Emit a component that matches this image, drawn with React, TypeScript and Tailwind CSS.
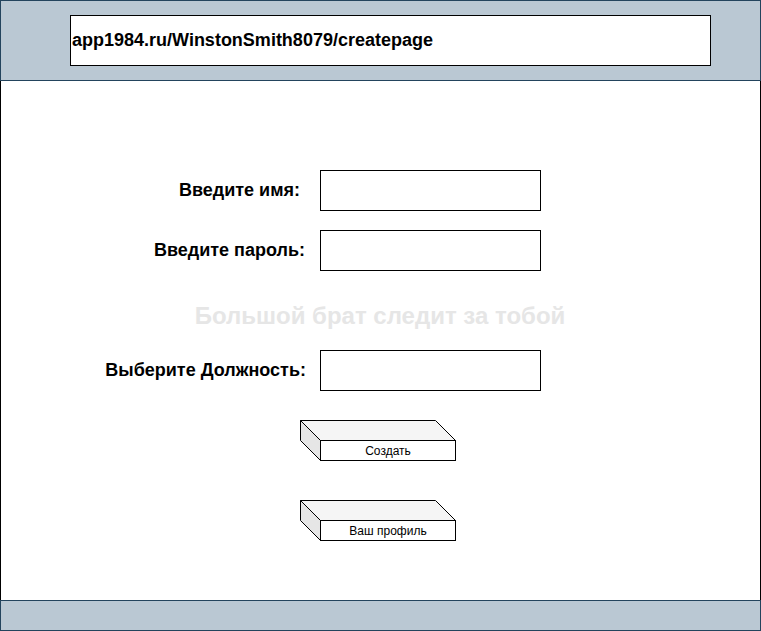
import React from 'react';

const font = { fontFamily: '"Liberation Sans", Arial, sans-serif' };

const Field = ({ label, gap }: { label: string; gap: string }) => {
  return (
    <div className="flex items-center">
      <div className={`w-[320px] text-right text-[18px] font-bold text-black ${gap}`}>{label}</div>
      <div className="w-[221px] h-[41px] border border-black bg-white" />
    </div>
  );
};

const Box3d = ({ text }: { text: string }) => {
  return (
    <div className="relative w-[156px] h-[41px] ml-[300px]">
      <svg width="156" height="41" className="absolute left-0 top-0">
        <polygon points="0.5,0.5 135.5,0.5 155.5,20.5 20.5,20.5" fill="#f5f5f5" stroke="#000" />
        <polygon points="0.5,0.5 20.5,20.5 20.5,40.5 0.5,20.5" fill="#e6e6e6" stroke="#000" />
        <rect x="20.5" y="20.5" width="135" height="20" fill="#fff" stroke="#000" />
      </svg>
      <div className="absolute left-[20px] top-[20px] w-[136px] h-[21px] flex items-center justify-center text-[12px] text-black">
        {text}
      </div>
    </div>
  );
};

const App = () => {
  return (
    <div className="w-[761px] h-[631px] flex flex-col bg-white" style={font}>
      <div className="h-[81px] border border-[#23445d] bg-[#bac8d3] pl-[69px] pt-[14px]">
        <div className="w-[641px] h-[51px] border border-black bg-white flex items-center pl-[1px] text-[18px] font-bold text-black">
          app1984.ru/WinstonSmith8079/createpage
        </div>
      </div>
      <div className="h-[519px] border-x border-black flex flex-col pt-[89px]">
        <div className="-ml-px flex flex-col">
          <Field label="Введите имя:" gap="pr-[20px]" />
          <div className="h-[19px]" />
          <Field label="Введите пароль:" gap="pr-[15px]" />
          <div className="h-[29px] " />
          <div className="h-[32px] flex items-center justify-center text-[24px] font-bold text-[#e6e6e6]">
            Большой брат следит за тобой
          </div>
          <div className="h-[18px]" />
          <Field label="Выберите Должность:" gap="pr-[14px]" />
          <div className="h-[29px]" />
          <Box3d text="Создать" />
          <div className="h-[39px]" />
          <Box3d text="Ваш профиль" />
        </div>
      </div>
      <div className="h-[31px] border border-[#23445d] bg-[#bac8d3]" />
    </div>
  );
};

export default App;
